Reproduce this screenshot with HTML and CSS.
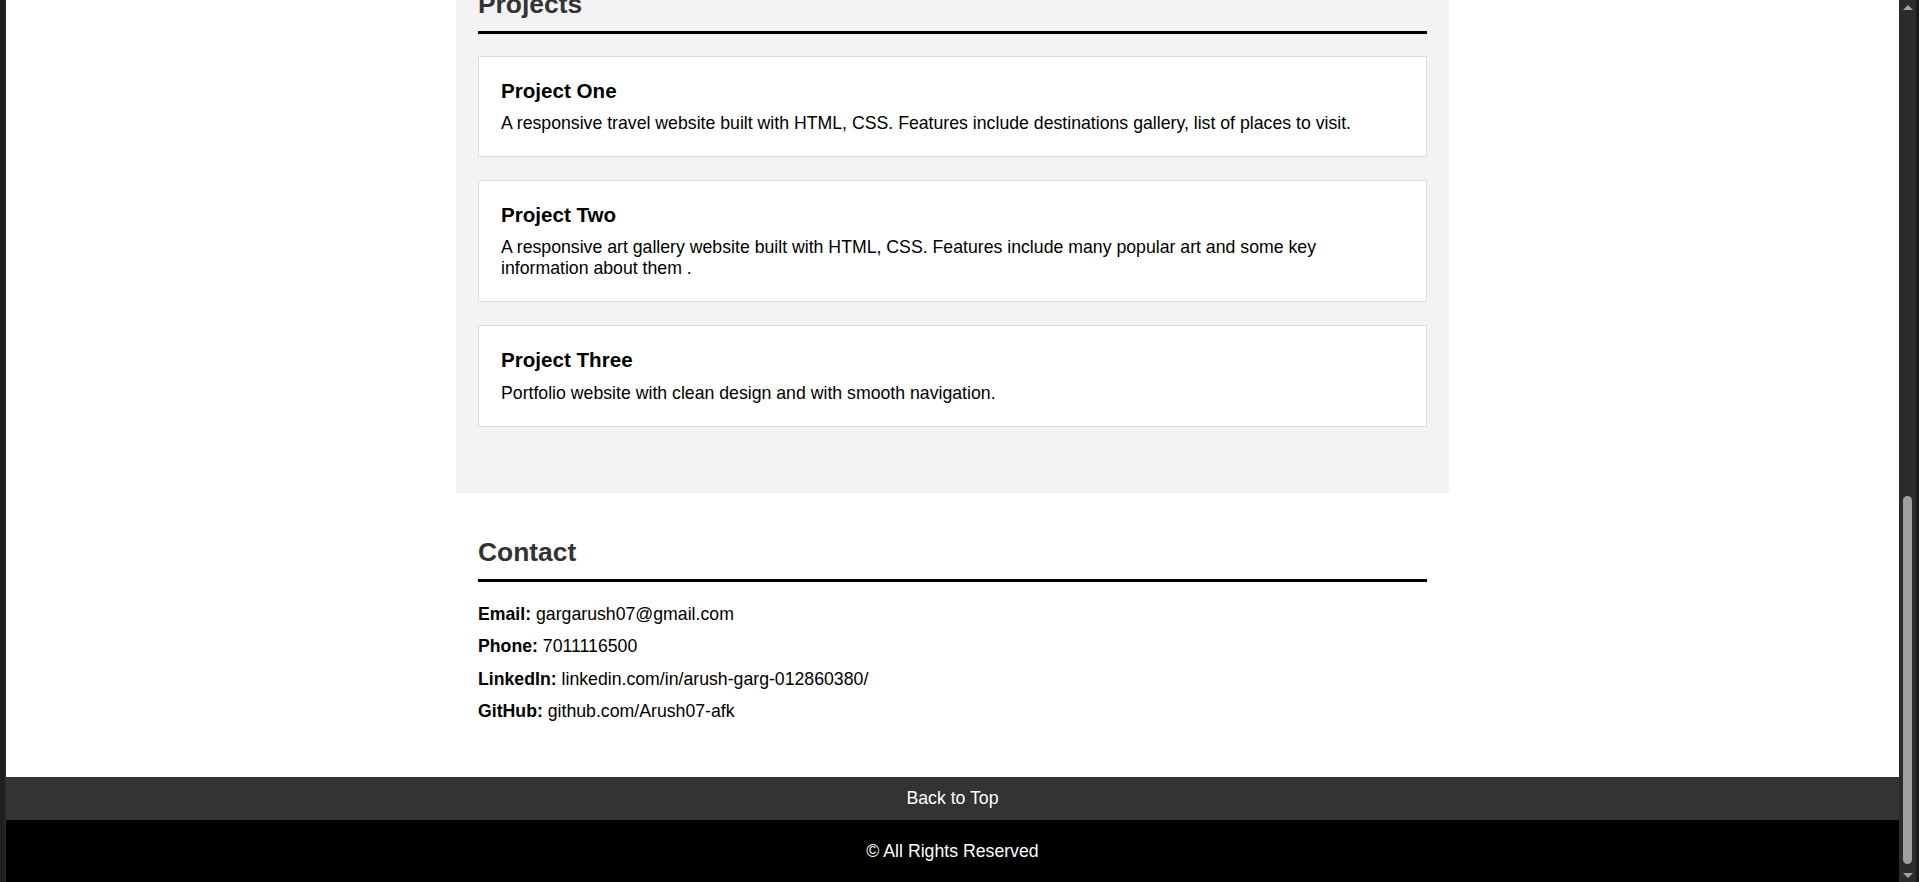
FILE: index.html
```html
<!DOCTYPE html>
<html lang="en">
<head>
<meta charset="utf-8">
<title>Arush Garg — Portfolio</title>
<link rel="stylesheet" href="styles.css">
</head>
<body>
<div class="frame">
  <div class="frame-edge"></div>
  <div class="viewport">
    <main class="page">
      <section class="section section-alt" id="projects">
        <h2 class="section-title">Projects</h2>
        <article class="card">
          <h3 class="card-title">Project One</h3>
          <p class="card-text">A responsive travel website built with HTML, CSS. Features include destinations gallery, list of places to visit.</p>
        </article>
        <article class="card">
          <h3 class="card-title">Project Two</h3>
          <p class="card-text">A responsive art gallery website built with HTML, CSS. Features include many popular art and some key information about them .</p>
        </article>
        <article class="card">
          <h3 class="card-title">Project Three</h3>
          <p class="card-text">Portfolio website with clean design and with smooth navigation.</p>
        </article>
      </section>
      <section class="section" id="contact">
        <h2 class="section-title">Contact</h2>
        <ul class="contact-list">
          <li class="contact-item"><strong>Email:</strong> gargarush07@gmail.com</li>
          <li class="contact-item"><strong>Phone:</strong> 7011116500</li>
          <li class="contact-item"><strong>LinkedIn:</strong> linkedin.com/in/arush-garg-012860380/</li>
          <li class="contact-item"><strong>GitHub:</strong> github.com/Arush07-afk</li>
        </ul>
      </section>
    </main>
    <div class="back-top"><a class="back-top-link" href="#">Back to Top</a></div>
    <footer class="footer">© All Rights Reserved</footer>
  </div>
  <div class="scrollbar">
    <div class="sb-arrow sb-arrow-up"></div>
    <div class="sb-track"><div class="sb-thumb"></div></div>
    <div class="sb-arrow sb-arrow-down"></div>
  </div>
</div>
</body>
</html>
```

FILE: styles.css
```css
html, body {
  margin: 0;
  padding: 0;
  height: 100%;
}

body {
  font-family: "Liberation Sans", Arial, sans-serif;
  font-size: 17.7px;
  line-height: 21px;
  color: #000;
  background: #1e1f1f;
  overflow: hidden;
}

.frame {
  display: flex;
  height: 100vh;
}

.frame-edge {
  width: 5px;
  flex-shrink: 0;
  background: #1e1f1f;
  border-right: 1px solid #2d2e2e;
}

.viewport {
  flex: 1;
  display: flex;
  flex-direction: column;
  justify-content: flex-end;
  overflow: hidden;
  background: #fff;
}

.page,
.back-top,
.footer {
  flex-shrink: 0;
}

.section {
  width: 949px;
  margin: 0 auto;
  padding: 44px 22px;
}

.section-alt {
  background: #f3f3f3;
}

.section-title {
  margin: 0 0 21.9px;
  padding-bottom: 11px;
  font-size: 26.4px;
  line-height: 31px;
  font-weight: bold;
  color: #333;
  border-bottom: 3px solid #000;
}

.card {
  background: #fff;
  border: 1px solid #ddd;
  padding: 22px;
  margin-bottom: 23px;
}

.card:last-child {
  margin-bottom: 22.7px;
}

.card-title {
  margin: 0 0 10.3px;
  font-size: 20.6px;
  line-height: 24px;
  font-weight: bold;
}

.card-text {
  margin: 0;
}

.contact-list {
  list-style: none;
  margin: 0;
  padding: 0;
}

.contact-item {
  margin-bottom: 11.2px;
}

.back-top {
  background: #333;
  height: 43px;
  display: flex;
  align-items: center;
  justify-content: center;
}

.back-top-link {
  color: #fff;
  text-decoration: none;
}

.footer {
  background: #000;
  color: #fff;
  height: 62px;
  display: flex;
  align-items: center;
  justify-content: center;
}

.scrollbar {
  width: 17px;
  flex-shrink: 0;
  display: flex;
  flex-direction: column;
  background: #2b2b2b;
  border-right: 3px solid #1b1b1b;
}

.sb-arrow {
  height: 14px;
  display: flex;
  justify-content: center;
  align-items: center;
}

.sb-arrow-up::before,
.sb-arrow-down::before {
  content: "";
  width: 0;
  height: 0;
  border-left: 5px solid transparent;
  border-right: 5px solid transparent;
}

.sb-arrow-up::before {
  border-bottom: 5px solid #a3a3a3;
}

.sb-arrow-down::before {
  border-top: 5px solid #a3a3a3;
}

.sb-track {
  flex: 1;
  display: flex;
  flex-direction: column;
  justify-content: flex-end;
  padding: 0 4px 4px;
}

.sb-thumb {
  height: 368px;
  background: #a0a0a0;
  border-radius: 5px;
}
```
